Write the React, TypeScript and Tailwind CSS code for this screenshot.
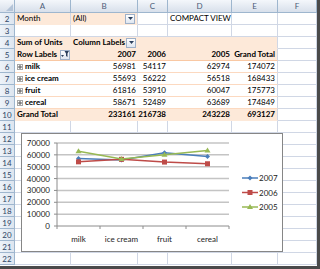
import React from 'react';

type Cell = {
  t?: React.ReactNode;
  r?: boolean;
  b?: boolean;
  peach?: boolean;
  noRight?: boolean;
  line?: 'light' | 'dark';
};

const PlusBox = () => (
  <span className="inline-flex items-center justify-center w-[6px] h-[6px] border border-[#a6a6a6] bg-white mr-[2px]">
    <svg width="4" height="4" viewBox="0 0 4 4">
      <path d="M0 2h4M2 0v4" stroke="#555" strokeWidth="1" />
    </svg>
  </span>
);

const DropBtn = () => (
  <span className="ml-auto shrink-0 w-[10px] h-[10px] border border-[#9eb0c8] bg-gradient-to-b from-[#ffffff] to-[#dfe6f0] flex items-center justify-center">
    <svg width="5" height="3" viewBox="0 0 5 3">
      <path d="M0 0h5L2.5 3z" fill="#2b3f5c" />
    </svg>
  </span>
);

const FilterBtn = () => (
  <span className="inline-flex ml-[3px] w-[10px] h-[10px] border border-[#9eb0c8] bg-gradient-to-b from-[#ffffff] to-[#dfe6f0] items-center justify-center">
    <svg width="8" height="7" viewBox="0 0 8 7">
      <path d="M0 4h3L1.5 6z" fill="#2b3f5c" />
      <path d="M3.5 0h4.5L6.5 2.5V6l-1.5-1V2.5z" fill="#2b3f5c" />
    </svg>
  </span>
);

const blank: Cell = {};

const pivotRow = (cells: Cell[], extra: Partial<Cell>): Cell[] =>
  cells.map((c, i) => (i < 5 ? { ...c, ...extra, noRight: i < 4 } : c));

const dataRow = (name: string, vals: string[]): Cell[] =>
  pivotRow(
    [
      { t: <><PlusBox />{name}</>, b: true },
      { t: vals[0], r: true },
      { t: vals[1], r: true },
      { t: vals[2], r: true },
      { t: vals[3], r: true },
      blank,
    ],
    { line: 'light' }
  );

const rows: Cell[][] = [
  [
    { t: 'Month', peach: true },
    { t: <>(All)<DropBtn /></>, peach: true },
    blank,
    { t: 'COMPACT VIEW' },
    blank,
    blank,
  ],
  [blank, blank, blank, blank, blank, blank],
  pivotRow(
    [
      { t: 'Sum of Units', b: true },
      { t: <>Column Labels<DropBtn /></>, b: true },
      blank,
      blank,
      blank,
      blank,
    ],
    { peach: true }
  ),
  pivotRow(
    [
      { t: <>Row Labels<FilterBtn /></>, b: true },
      { t: '2007', r: true, b: true },
      { t: '2006', r: true, b: true },
      { t: '2005', r: true, b: true },
      { t: 'Grand Total', r: true, b: true },
      blank,
    ],
    { peach: true, line: 'dark' }
  ),
  dataRow('milk', ['56981', '54117', '62974', '174072']),
  dataRow('ice cream', ['55693', '56222', '56518', '168433']),
  dataRow('fruit', ['61816', '53910', '60047', '175773']),
  dataRow('cereal', ['58671', '52489', '63689', '174849']),
  pivotRow(
    [
      { t: 'Grand Total', b: true },
      { t: '233161', r: true, b: true },
      { t: '216738', r: true, b: true },
      { t: '243228', r: true, b: true },
      { t: '693127', r: true, b: true },
      blank,
    ],
    { peach: true }
  ),
];
while (rows.length < 21) rows.push([blank, blank, blank, blank, blank, blank]);

const cols = ['A', 'B', 'C', 'D', 'E', 'F'];

const cats = ['milk', 'ice cream', 'fruit', 'cereal'];
const xs = [57.5, 100.5, 143.5, 186.5];
const yOf = (v: number) => 93 - (v / 70000) * 83;

const series = [
  { name: '2007', color: '#4a7ebb', vals: [56981, 55693, 61816, 58671], mark: 'diamond' },
  { name: '2006', color: '#be4b48', vals: [54117, 56222, 53910, 52489], mark: 'square' },
  { name: '2005', color: '#98b954', vals: [62974, 56518, 60047, 63689], mark: 'tri' },
];

const Marker = ({ x, y, kind, color }: { x: number; y: number; kind: string; color: string }) => {
  if (kind === 'square') return <rect x={x - 2.5} y={y - 2.5} width="5" height="5" fill={color} />;
  if (kind === 'tri') return <path d={`M${x} ${y - 3}L${x + 3} ${y + 2}H${x - 3}z`} fill={color} />;
  return <path d={`M${x} ${y - 2.5}L${x + 2.5} ${y}L${x} ${y + 2.5}L${x - 2.5} ${y}z`} fill={color} />;
};

// embedded chart object floats over the worksheet cells
const Chart = () => (
  <div className="absolute left-[21px] top-[133px] w-[262px] h-[119px] bg-white border border-[#868686]">
    <svg width="260" height="117" viewBox="1 1 260 117" className="font-['Lato',sans-serif]">
      {[0, 1, 2, 3, 4, 5, 6, 7].map((i) => {
        const y = 93 - i * (83 / 7);
        return (
          <g key={i}>
            {i > 0 && <line x1="36" x2="208" y1={y} y2={y} stroke="#c4c4c4" strokeWidth="1.5" />}
            <line x1="33" x2="36" y1={y} y2={y} stroke="#8c8c8c" strokeWidth="1" />
            <text x="29" y={y + 3} fontSize="8" textAnchor="end" fill="#222">
              {i * 10000}
            </text>
          </g>
        );
      })}
      <line x1="36" x2="36" y1="10" y2="93" stroke="#8c8c8c" strokeWidth="1" />
      <line x1="36" x2="208" y1="93" y2="93" stroke="#8c8c8c" strokeWidth="1" />
      {[36, 79, 122, 165, 208].map((x) => (
        <line key={x} x1={x} x2={x} y1="93" y2="96" stroke="#8c8c8c" strokeWidth="1" />
      ))}
      {cats.map((c, i) => (
        <text key={c} x={xs[i]} y="109" fontSize="8" textAnchor="middle" fill="#222">
          {c}
        </text>
      ))}
      {series.map((s) => (
        <g key={s.name}>
          <polyline
            points={s.vals.map((v, i) => `${xs[i]},${yOf(v)}`).join(' ')}
            fill="none"
            stroke={s.color}
            strokeWidth="1.5"
          />
          {s.vals.map((v, i) => (
            <Marker key={i} x={xs[i]} y={yOf(v)} kind={s.mark} color={s.color} />
          ))}
        </g>
      ))}
      {series.map((s, i) => {
        const y = 45 + i * 14.5;
        return (
          <g key={s.name}>
            <line x1="221" x2="237" y1={y} y2={y} stroke={s.color} strokeWidth="1.5" />
            <Marker x={229} y={y} kind={s.mark} color={s.color} />
            <text x="238" y={y + 3} fontSize="8" fill="#222">
              {s.name}
            </text>
          </g>
        );
      })}
    </svg>
  </div>
);

export default function App() {
  return (
    <div className="w-[320px] h-[269px] bg-[#4a4a4a] font-['Lato',sans-serif] text-[8px] text-black">
      <div className="relative w-[317px] h-[266px] bg-white overflow-hidden">
        <div className="grid grid-cols-[15px_56px_67px_30px_64px_46px_39px]">
          <div className="h-[13px] bg-gradient-to-b from-[#f4f7fb] to-[#d8e0eb] border-r border-b border-[#9eb6ce] flex items-end justify-end p-[1px]">
            <span className="w-0 h-0 border-l-[7px] border-l-transparent border-b-[7px] border-b-[#b4c4d8]" />
          </div>
          {cols.map((c) => (
            <div
              key={c}
              className="h-[13px] bg-gradient-to-b from-[#f4f7fb] to-[#d8e0eb] border-r border-b border-[#9eb6ce] flex items-center justify-center text-[#4b5d78]"
            >
              {c}
            </div>
          ))}
          {rows.map((row, ri) => (
            <React.Fragment key={ri}>
              <div className="h-[12px] bg-gradient-to-r from-[#eef3f9] to-[#dde5ef] border-r border-b border-[#9eb6ce] flex items-center justify-center text-[#2e4565]">
                {ri + 2}
              </div>
              {row.map((c, ci) => (
                <div
                  key={ci}
                  className={[
                    'h-[12px] leading-[11px] px-[2px] whitespace-nowrap flex items-center',
                    c.r ? 'justify-end' : '',
                    c.b ? 'font-bold' : '',
                    c.peach ? 'bg-[#fde9d9]' : 'bg-white',
                    c.noRight ? '' : 'border-r border-[#d0d7e5]',
                    c.line === 'dark'
                      ? 'border-b border-b-[#f9c8a3]'
                      : c.line === 'light'
                      ? 'border-b border-b-[#fcd9c0]'
                      : c.peach
                      ? 'border-b border-b-[#fde9d9]'
                      : 'border-b border-b-[#d0d7e5]',
                  ].join(' ')}
                >
                  {c.t}
                </div>
              ))}
            </React.Fragment>
          ))}
        </div>
        <Chart />
      </div>
    </div>
  );
}
